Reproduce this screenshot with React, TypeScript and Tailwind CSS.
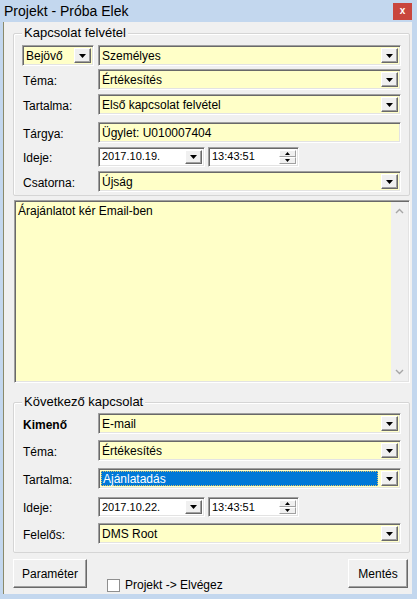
import React from 'react';

const FONT = "font-['Liberation_Sans',Arial,sans-serif]";

function DropBtn() {
  return (
    <div className="ml-auto w-[17px] h-full flex items-center justify-center bg-[#f0f0f0] border border-t-white border-l-white border-b-[#696969] border-r-[#696969] shadow-[inset_-1px_-1px_0_#a0a0a0]">
      <svg width="7" height="4" viewBox="0 0 7 4">
        <path d="M0 0h7L3.5 4z" fill="#000" />
      </svg>
    </div>
  );
}

function Combo({
  value,
  className = '',
  selected = false,
  noButton = false,
  bold = false,
}: {
  value: string;
  className?: string;
  selected?: boolean;
  noButton?: boolean;
  bold?: boolean;
}) {
  return (
    <div
      className={`flex items-stretch h-[21px] bg-[#ffffc8] border border-t-[#a0a0a0] border-l-[#a0a0a0] border-b-white border-r-white shadow-[inset_1px_1px_0_#696969,inset_-1px_-1px_0_#e3e3e3] p-[2px] ${className}`}
    >
      {selected ? (
        <div className="flex-1 mr-[3px] flex items-center pl-[1px] text-[12px] text-white bg-[#0078d7] border border-dotted border-[#d8c070]">
          {value}
        </div>
      ) : (
        <div className={`flex-1 flex items-center pl-[1px] text-[12px] text-black ${bold ? 'font-bold' : ''}`}>
          {value}
        </div>
      )}
      {!noButton && <DropBtn />}
    </div>
  );
}

function DateBox({ value }: { value: string }) {
  return (
    <div className="flex items-stretch w-[107px] h-[20px] bg-white border border-t-[#a0a0a0] border-l-[#a0a0a0] border-b-white border-r-white shadow-[inset_1px_1px_0_#696969,inset_-1px_-1px_0_#e3e3e3] p-[2px]">
      <div className="flex-1 flex items-center pl-[1px] text-[11px] text-black">{value}</div>
      <DropBtn />
    </div>
  );
}

function TimeBox({ value }: { value: string }) {
  return (
    <div className="flex items-stretch w-[91px] h-[20px] bg-white border border-t-[#a0a0a0] border-l-[#a0a0a0] border-b-white border-r-white shadow-[inset_1px_1px_0_#696969,inset_-1px_-1px_0_#e3e3e3] p-[2px]">
      <div className="flex-1 flex items-center pl-[1px] text-[11px] text-black">{value}</div>
      <div className="w-[17px] flex flex-col">
        <div className="flex-1 flex items-center justify-center bg-[#f0f0f0] border border-t-white border-l-white border-b-[#a0a0a0] border-r-[#a0a0a0]">
          <svg width="5" height="3" viewBox="0 0 5 3">
            <path d="M0 3h5L2.5 0z" fill="#000" />
          </svg>
        </div>
        <div className="flex-1 flex items-center justify-center bg-[#f0f0f0] border border-t-white border-l-white border-b-[#a0a0a0] border-r-[#a0a0a0]">
          <svg width="5" height="3" viewBox="0 0 5 3">
            <path d="M0 0h5L2.5 3z" fill="#000" />
          </svg>
        </div>
      </div>
    </div>
  );
}

function Row({ label, children, className = '', bold = false }: { label: string; children: React.ReactNode; className?: string; bold?: boolean }) {
  return (
    <div className={`flex items-center h-[21px] ${className}`}>
      <span className={`w-[84px] pl-[9px] pt-[3px] text-[12px] text-black ${bold ? 'font-bold' : ''}`}>{label}</span>
      {children}
    </div>
  );
}

function Group({ title, className = '', children }: { title: string; className?: string; children: React.ReactNode }) {
  return (
    <div className={`relative ml-[9px] w-[397px] border border-[#d5d5d5] rounded-[2px] shadow-[inset_1px_1px_0_#ffffff] ${className}`}>
      <span className="absolute -top-[9px] left-[8px] px-[2px] bg-[#f0f0f0] text-[13px] leading-[16px] text-black">
        {title}
      </span>
      {children}
    </div>
  );
}

function WinButton({ label, className = '' }: { label: string; className?: string }) {
  return (
    <button className={`h-[29px] flex items-center justify-center text-[12px] text-black bg-[#f0f0f0] border border-t-white border-l-white border-b-[#696969] border-r-[#696969] shadow-[inset_-1px_-1px_0_#a0a0a0] ${className}`}>
      {label}
    </button>
  );
}

export default function App() {
  return (
    <div className={`w-[417px] h-[599px] bg-[#c3d7ee] ${FONT} overflow-hidden`}>
      {/* title bar */}
      <div className="h-[22px] flex items-center justify-between pl-[4px] pr-[5px]">
        <span className="text-[14px] text-black">Projekt - Próba Elek</span>
        <div className="w-[19px] h-[17px] bg-[#c9463d] flex items-center justify-center text-white text-[10px] font-bold leading-none">
          x
        </div>
      </div>

      {/* client area */}
      <div className="ml-[3px] w-[409px] h-[572px] bg-[#f0f0f0] border-l border-[#8a8a6a] flex flex-col">
        <Group title="Kapcsolat felvétel" className="mt-[11px] h-[163px] pt-[11px]">
          <div className="flex items-center h-[21px]">
            <Combo value="Bejövő" className="ml-[8px] w-[72px]" />
            <Combo value="Személyes" className="ml-[4px] w-[303px]" />
          </div>
          <Row label="Téma:" className="mt-[3px]">
            <Combo value="Értékesítés" className="w-[303px]" />
          </Row>
          <Row label="Tartalma:" className="mt-[4px]">
            <Combo value="Első kapcsolat felvétel" className="w-[303px]" />
          </Row>
          <Row label="Tárgya:" className="mt-[7px]">
            <Combo value="Ügylet: U010007404" className="w-[303px]" noButton />
          </Row>
          <Row label="Ideje:" className="mt-[3px]">
            <DateBox value="2017.10.19." />
            <div className="ml-[3px]">
              <TimeBox value="13:43:51" />
            </div>
          </Row>
          <Row label="Csatorna:" className="mt-[4px]">
            <Combo value="Újság" className="w-[303px]" />
          </Row>
        </Group>

        {/* memo */}
        <div className="mt-[4px] ml-[10px] w-[396px] h-[184px] flex bg-[#ffffc8] border border-t-[#a0a0a0] border-l-[#a0a0a0] border-b-white border-r-white shadow-[inset_1px_1px_0_#696969,inset_-1px_-1px_0_#e3e3e3] p-[1px]">
          <div className="flex-1 pl-[2px] pt-[2px] text-[12px] leading-[15px] text-black">Árajánlatot kér Email-ben</div>
          <div className="w-[17px] bg-[#f0f0f0] flex flex-col items-center justify-between py-[6px]">
            <svg width="9" height="6" viewBox="0 0 9 6">
              <path d="M1 5l3.5-3.5L8 5" fill="none" stroke="#a6a6a6" strokeWidth="1.4" />
            </svg>
            <svg width="9" height="6" viewBox="0 0 9 6">
              <path d="M1 1l3.5 3.5L8 1" fill="none" stroke="#a6a6a6" strokeWidth="1.4" />
            </svg>
          </div>
        </div>

        <Group title="Következő kapcsolat" className="mt-[19px] h-[151px] pt-[10px]">
          <Row label="Kimenő" bold>
            <Combo value="E-mail" className="w-[303px]" />
          </Row>
          <Row label="Téma:" className="mt-[6px]">
            <Combo value="Értékesítés" className="w-[303px]" />
          </Row>
          <Row label="Tartalma:" className="mt-[7px]">
            <Combo value="Ajánlatadás" className="w-[303px]" selected />
          </Row>
          <Row label="Ideje:" className="mt-[7px]">
            <DateBox value="2017.10.22." />
            <div className="ml-[3px]">
              <TimeBox value="13:43:51" />
            </div>
          </Row>
          <Row label="Felelős:" className="mt-[6px]">
            <Combo value="DMS Root" className="w-[303px]" />
          </Row>
        </Group>

        {/* buttons */}
        <div className="mt-[6px] flex items-start">
          <WinButton label="Paraméter" className="ml-[9px] w-[74px]" />
          <div className="ml-[20px] mt-[17px] flex items-center">
            <div className="w-[13px] h-[13px] bg-white border border-[#8f8f8f]" />
            <span className="ml-[5px] text-[12px] text-black">Projekt -&gt; Elvégez</span>
          </div>
          <WinButton label="Mentés" className="ml-auto mr-[4px] w-[60px]" />
        </div>
      </div>
    </div>
  );
}
